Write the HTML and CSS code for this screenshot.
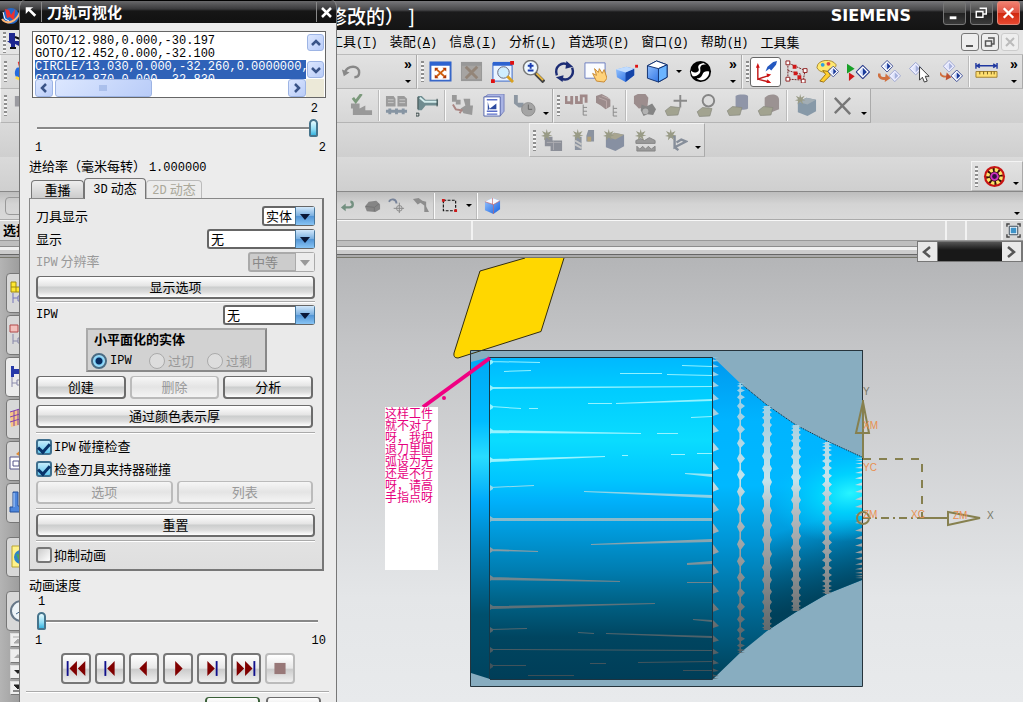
FILE: index.html
```html
<!DOCTYPE html>
<html lang="zh-CN">
<head>
<meta charset="utf-8">
<title>刀轨可视化</title>
<link rel="stylesheet" href="styles.css">
</head>
<body>
<svg width="0" height="0" class="defs" aria-hidden="true">
  <defs>
    <linearGradient id="blue" x1="0" y1="0" x2="1" y2="1"><stop offset="0" stop-color="#9cc8ff"/><stop offset="1" stop-color="#1560e0"/></linearGradient>
    <symbol id="dia" viewBox="0 0 14 14"><path d="M7 .5 13.500 7 7 13.500.5 7z" fill="#fff" stroke="#2a3c8c"/><path d="M7 3v8L3.500 7z" fill="#c9d6fa"/><path d="M7 3v8l4-4z" fill="#1a3a9a"/></symbol>
    <symbol id="diaOff" viewBox="0 0 14 14"><path d="M7 .5 13.500 7 7 13.500.5 7z" fill="#eef" stroke="#98a2d0"/><path d="M7 3v8L3.500 7z" fill="#dde3fa"/><path d="M7 3v8l4-4z" fill="#a5b0dc"/></symbol>
    <symbol id="tag" viewBox="0 0 16 10"><path d="M1 5 6 1l9 1-2 7-10 .5z" fill="#a2a390" stroke="#8a8b80" stroke-width=".7"/></symbol>
    <symbol id="star" viewBox="0 0 12 12"><path d="m6 0 1 4 4-2-2.500 4 3.500 1-4 .6L9.500 12 6 8.600 3 12l.6-4L0 7.200 3.600 6 1 2l4 2z" fill="#999b86"/></symbol>
  </defs>
</svg>

<div class="app">
  <header class="titlebar">
    <svg class="logo" viewBox="0 0 22 22"><circle cx="11" cy="11" r="8" fill="#2368c8"/><path d="M5 4l4 1 2 5 4-6-1 12-4-4-3 1z" fill="#f03030"/><path d="M2 14c5 7 15 2 18-7" fill="none" stroke="#ffb878" stroke-width="2"/><path d="M3 7l2 7 4 2" fill="none" stroke="#fff"/></svg>
    <h1 class="doc-title">修改的） ]</h1>
    <span class="brand">SIEMENS</span>
    <div class="win-buttons">
      <button class="win" aria-label="最小化"><svg viewBox="0 0 22 22"><path d="M6 16h7" stroke="#fff" stroke-width="3"/></svg></button>
      <button class="win" aria-label="还原"><svg viewBox="0 0 22 22"><path d="M9 6h7v6h-3M5.500 9.500h7v6h-7z" fill="none" stroke="#fff" stroke-width="1.500"/></svg></button>
      <button class="win close" aria-label="关闭"><svg viewBox="0 0 22 22"><path d="m6 6 10 10M16 6 6 16" stroke="#fff" stroke-width="2.500"/></svg></button>
    </div>
  </header>

  <nav class="menubar">
    <i class="grip"></i>
    <svg class="menu-icon" viewBox="0 0 14 20"><path d="M2 1h6v8h4v5l-4-2v4H4v-4l-4-3h2z" fill="#1f2890"/><path d="M3 16h6M8 5l5 2v5" stroke="#111" stroke-width="2" fill="none"/></svg>
    <div class="menus">
      <button>工具<span>(<u>T</u>)</span></button>
      <button>装配<span>(<u>A</u>)</span></button>
      <button>信息<span>(<u>I</u>)</span></button>
      <button>分析<span>(<u>L</u>)</span></button>
      <button>首选项<span>(<u>P</u>)</span></button>
      <button>窗口<span>(<u>O</u>)</span></button>
      <button>帮助<span>(<u>H</u>)</span></button>
      <button>工具集</button>
    </div>
    <div class="mdi-buttons">
      <button aria-label="最小化窗口"><svg viewBox="0 0 16 16"><path d="M4 12h7" stroke="#555" stroke-width="2"/></svg></button>
      <button aria-label="还原窗口"><svg viewBox="0 0 16 16"><path d="M6 4h6v6h-2M3.500 7h6v5h-6z" fill="none" stroke="#555" stroke-width="1.500"/></svg></button>
      <button disabled aria-label="关闭窗口"><svg viewBox="0 0 16 16"><path d="m4 4 8 8m0-8-8 8" stroke="#bbb" stroke-width="2"/></svg></button>
    </div>
  </nav>

  <div class="toolrow">
    <div class="group lead-a">
      <i class="grip"></i>
      <button class="tool" aria-label="开始"><svg viewBox="0 0 24 24"><path d="M6 2 12 0 16 4 9 14z" fill="#e83030"/><path d="M5 8c-4 5-2 12 5 13h8V6z" fill="#246be0"/><path d="M4 18l8 4" stroke="#ffd840" stroke-width="3"/></svg></button>
      <b class="fill"></b>
      <button class="tool" disabled aria-label="撤销"><svg viewBox="0 0 24 24"><path d="M5 13c3-8 15-8 15 0 0 3-2 5-5 5" fill="none" stroke="#888" stroke-width="2.500"/><path d="m2 10 2 7 6-4z" fill="#888"/></svg></button>
      <b class="gap"></b>
      <button class="more" aria-label="更多"><span>»</span><i></i></button>
    </div>
    <div class="group lead-b">
      <i class="grip"></i>
      <button class="tool" aria-label="适合窗口"><svg viewBox="0 0 24 24"><path d="M1.500 2.500h21v19h-21z" fill="#fff" stroke="#3867c8" stroke-width="2"/><path d="M1 2h22v4H1z" fill="#2d63d0"/><path d="m7 9 10 9M17 9 7 18" stroke="#d06010" stroke-width="2"/><path d="M6 8h4L6 12zM18 8v4l-4-4zM6 19v-4l4 4zM18 19h-4l4-4z" fill="#b03808"/></svg></button>
      <button class="tool" disabled aria-label="适合选择"><svg viewBox="0 0 24 24"><path d="M1 2h22v20H1z" fill="#989898"/><path d="M2 6h20v14H2z" fill="#a6a4a2"/><path d="m6 7 12 12M18 7 6 19" stroke="#938578" stroke-width="3"/></svg></button>
      <button class="tool" aria-label="缩放窗口"><svg viewBox="0 0 24 24"><path d="M2 3h20v19H2z" fill="#eaf4ff" stroke="#3465ca"/><path d="M2 2h20v4H2z" fill="#2d63d0"/><circle cx="13" cy="13" r="6" fill="#cfeeff" stroke="#667"/><path d="m17 17 6 6" stroke="#d8a020" stroke-width="3"/><path d="M20 1h4v4h-4zM0 20h4v4H0z" fill="#e01010"/></svg></button>
      <button class="tool" aria-label="缩放"><svg viewBox="0 0 24 24"><circle cx="9" cy="8" r="7.500" fill="#eef8ff" stroke="#777" stroke-width="1.500"/><path d="M9 3v6M6 6h6M6 11h6" stroke="#1a3cb0" stroke-width="2"/><path d="m14 14 9 9" stroke="#444" stroke-width="4"/><path d="m15 14 7 7" stroke="#e8b840" stroke-width="2"/></svg></button>
      <button class="tool" aria-label="旋转"><svg viewBox="0 0 24 24"><path d="M4 16C1 7 9 1 16 5M20 8c3 9-5 15-12 11" fill="none" stroke="#1c2c74" stroke-width="2.500"/><path d="m14 1 7 6-8 2zM10 23l-7-5 8-2z" fill="#1c2c74"/></svg></button>
      <button class="tool" aria-label="平移"><svg viewBox="0 0 24 24"><path d="M1 3h21v16H1z" fill="#fafcff" stroke="#6c7ec0"/><path d="m9 14 4 8 8 1 3-4-3-9-2 4-3-5-1 4-4-4 2 7z" fill="#ffd27a" stroke="#c88830"/></svg></button>
      <button class="tool" aria-label="透视"><svg viewBox="0 0 24 24"><path d="M1 10 12 7l8 2v7l-9 7-9-5z" fill="url(#blue)"/><path d="m11 13 9-4v7l-9 7z" fill="#1545a8"/><path d="m1 10 11-3 8 2-9 4z" fill="#c0dcff"/><path d="M21 5h3v3h-3z" fill="#e01010"/></svg></button>
      <button class="tool" aria-label="着色"><svg viewBox="0 0 24 24"><path d="M1.500 6 11 1l11 4v13l-9 5-11.500-4z" fill="url(#blue)" stroke="#103070"/><path d="M1.500 6 11 1l11 4-9 4z" fill="#fff" stroke="#103070"/><path d="M13 9v14l9-5V5z" fill="#6ab4ff" stroke="#103070"/></svg></button>
      <button class="drop mid" aria-label="着色选项"></button>
      <button class="tool" aria-label="面分析"><svg viewBox="0 0 24 24"><circle cx="12" cy="12" r="11" fill="#000"/><path d="M15 3c-5 1-6 3-5 6 1 2-1 4-4 4-2 0-3-1-4-2 0 3 1 5 2 6 3 0 5-1 7-3 2-3 0-5 1-7s3-3 6-2z" fill="#fff"/><path d="M21 12c-3-1-6 0-7 3s-3 4-6 4c3 3 8 3 11-1 2-2 2-4 2-6z" fill="#fff"/></svg></button>
      <b class="fill"></b>
      <button class="more" aria-label="更多"><span>»</span><i></i></button>
    </div>
    <div class="group rest">
      <i class="grip"></i>
      <button class="tool on" aria-label="坐标系"><svg viewBox="0 0 24 24"><path d="M4 7v13l12-4M4 20l12 3" fill="none" stroke="#c01818" stroke-width="1.500"/><path d="m4 3-2 5h4zM13 14l5 1-4 3zM14 20l4 4-5 0z" fill="#d01010"/><path d="m14 7 6-5 4-1-1 4-5 6-2-2-4 3z" fill="#2458c0"/></svg></button>
      <button class="tool" aria-label="程序顺序"><svg viewBox="0 0 24 24"><path d="M3 3v17l16 1 2-10zM3 11l14 4" fill="none" stroke="#702020" stroke-dasharray="2 1"/><path d="M1 1h4v4H1zM1 18h4v4H1zM19 9h4v4h-4zM17 20h4v4h-4z" fill="#fff" stroke="#902020"/><path d="M8 5h4v4H8zM9 12h4v4H9zM13 16h4v4h-4z" fill="#d01818"/></svg></button>
      <button class="tool" aria-label="刀具"><svg viewBox="0 0 24 24"><path d="M1 8C1-1 17-2 21 5c0 5-7 2-8 6-2 3-10 2-12-3z" fill="#ffe870" stroke="#a88830"/><circle cx="7" cy="5" r="2" fill="#30a0e0"/><circle cx="13" cy="4" r="2" fill="#e04040"/><path d="m4 22 6-7-3-4 6 1 2 4-7 7z" fill="#ffcf30" stroke="#9a7010"/><use href="#dia" x="12" y="6" width="12" height="12"/></svg></button>
      <button class="tool" aria-label="仿真"><svg viewBox="0 0 24 24"><path d="m0 4 8 5-8 5z" fill="#18a028"/><path d="m2 13 6 4-6 5z" fill="#d01818"/><use href="#dia" x="9" y="5" width="15" height="15"/></svg></button>
      <button class="tool" aria-label="后处理"><svg viewBox="0 0 24 24"><use href="#dia" x="3" y="0" width="13" height="13"/><use href="#diaOff" x="11" y="10" width="13" height="13"/><path d="M1 14c0 5 4 6 8 5" fill="none" stroke="#d07040" stroke-width="3"/><path d="m8 14 5 5-6 4z" fill="#d07040"/></svg></button>
      <button class="tool" aria-label="选择"><svg viewBox="0 0 24 24"><use href="#diaOff" x="0" y="2" width="14" height="14"/><path d="m11 7 10 10h-4l2 5-3 1-2-5-3 3z" fill="#fff" stroke="#333"/></svg></button>
      <button class="tool" aria-label="变换"><svg viewBox="0 0 24 24"><use href="#diaOff" x="3" y="0" width="13" height="13"/><use href="#dia" x="11" y="10" width="13" height="13"/><path d="M0 13c1 4 4 5 8 4" fill="none" stroke="#d07040" stroke-width="2"/><path d="m7 13 5 5-6 3z" fill="#c05030"/></svg></button>
      <i class="sep"></i>
      <button class="tool" aria-label="测量"><svg viewBox="0 0 24 24"><path d="M1 6h22M1 3v6m22-6v6M5 4 2 6l3 2m14-4 3 2-3 2" fill="none" stroke="#2038a0" stroke-width="1.500"/><path d="M1 12h22v6H1z" fill="#ffdf70" stroke="#a08030"/><path d="M5 12v3m4-3v3m4-3v3m4-3v3m3-3v3" stroke="#705818"/></svg></button>
      <b class="fill"></b>
      <button class="more" aria-label="更多"><span>»</span><i></i></button>
    </div>
  </div>

  <div class="toolrow">
    <div class="group lead-c">
      <i class="grip"></i>
      <button class="tool" disabled aria-label="创建程序"><svg viewBox="0 0 24 24"><path d="M3 2h7v10h13v8H10v-7H3z" fill="#9a9aa0"/></svg></button>
      <b class="fill"></b>
      <button class="tool" disabled aria-label="校验"><svg viewBox="0 0 24 24"><path d="M1 10h9v5l6-3v5h7v5H3v-7H1z" fill="#999"/><path d="m3 4 3 4 6-8" fill="none" stroke="#7b997b" stroke-width="3"/></svg></button>
      <i class="sep"></i>
      <button class="tool" disabled aria-label="列表"><svg viewBox="0 0 24 24"><path d="M1 2h8l2 3v8H1zM13 2h7l3 3v8H13z" fill="#9b9b9b"/><path d="M3 6h6M3 9h6m6-3h6m-6 3h6" stroke="#c8c8c8"/><path d="M1 18h22M5 15v6m7-6v6m7-6v6" stroke="#8795a3" stroke-width="3"/></svg></button>
      <button class="tool" aria-label="机床"><svg viewBox="0 0 24 24"><path d="M2 2h4l4 4h13v6H10l-4 5H2z" fill="#6f8c90"/><path d="M4 4l5 4h13" stroke="#d4ecec" stroke-width="2" fill="none"/><path d="M2 3v13M0 20h3v3H0zM22 5v8" stroke="#344" fill="none"/></svg></button>
      <i class="sep"></i>
      <button class="tool" disabled aria-label="同步"><svg viewBox="0 0 24 24"><path d="M1 1h5v5h4v5H5V8H1zM13 5h7v7h3l-1 10-9-2-3-5 5-3z" fill="#999"/><path d="m2 11 3 5 6 1-2 3" fill="none" stroke="#aa8582" stroke-width="2"/></svg></button>
      <button class="tool" aria-label="车间文档"><svg viewBox="0 0 24 24"><path d="m3 3 4-3h16v18l-4 5z" fill="#a9b3e4" stroke="#7a83b8"/><path d="M2 3h17v20H2z" fill="#fff" stroke="#5262a8"/><path d="M5 6h11M5 18h11m-11 3h11" stroke="#5a6ec8" stroke-width="1.500"/><path d="M6 8v9l9-7v6H8z" fill="#2d4ba0"/></svg></button>
      <button class="tool" disabled aria-label="时间"><svg viewBox="0 0 24 24"><path d="M1 1h4v8h6v5H6l-5-4z" fill="#8d97a2"/><circle cx="16" cy="16" r="7" fill="#a4a4a4" stroke="#8c8c8c"/><path d="M16 11v5h4" stroke="#666" fill="none"/></svg></button>
      <button class="drop" aria-label="选项"></button>
    </div>
    <div class="group lead-d">
      <i class="grip"></i>
      <button class="tool" disabled aria-label="程序视图"><svg viewBox="0 0 24 24"><path d="M1 2v7h6M7 2v9m5-9v7h5V2h5v7" fill="none" stroke="#9f8888" stroke-width="3"/><path d="M19 11v11M19 14h4m-4 4h4m-4 4h4" stroke="#888" fill="none"/></svg></button>
      <button class="tool" disabled aria-label="加工方法"><svg viewBox="0 0 24 24"><path d="M0 2 6 0l6 3 3 3v7l-5 3-5-4-5-3z" fill="#9c8c8c"/><path d="M3 4l8 3v8M6 2l8 3" stroke="#bba9a9" fill="none"/><path d="M18 12v11M18 15h4m-4 4h4m-4 4h4" stroke="#888" fill="none"/></svg></button>
      <i class="sep"></i>
      <button class="tool" disabled aria-label="查找"><svg viewBox="0 0 24 24"><path d="M1 2 5 0h8l3 4-1 10-9 1-5-5z" fill="#9c8d8d"/><path d="m9 11 5 2 6-3 4 6-3 6-6-1-4 2-3-6z" fill="#858585"/><circle cx="13" cy="18" r="3" fill="#b2b2b2"/></svg></button>
      <button class="tool" disabled aria-label="添加"><svg viewBox="0 0 24 24"><path d="M17 1v13m-7-7h14" stroke="#8a8a8a" stroke-width="2"/><use href="#tag" x="0" y="12" width="18" height="11"/></svg></button>
      <button class="tool" disabled aria-label="显示对象"><svg viewBox="0 0 24 24"><circle cx="14" cy="7" r="6" fill="#ddd" stroke="#858585" stroke-width="2"/><use href="#tag" x="1" y="13" width="18" height="11"/></svg></button>
      <button class="tool" disabled aria-label="切换图层"><svg viewBox="0 0 24 24"><path d="M10 2c3-2 11-2 13 0v13c-3 2-10 2-13 0z" fill="#8f95a8"/><use href="#tag" x="0" y="12" width="18" height="11"/></svg></button>
      <button class="tool" disabled aria-label="切换布局"><svg viewBox="0 0 24 24"><path d="M8 4c4-5 15-5 15 2v10l-8 3-7-4z" fill="#9b9292"/><use href="#tag" x="0" y="12" width="18" height="11"/></svg></button>
      <i class="sep"></i>
      <button class="tool" disabled aria-label="新建"><svg viewBox="0 0 24 24"><path d="m4 8 9-4 10 2v12l-9 5-10-4z" fill="#8799a8"/><path d="m4 8 10 3 9-5-10-2z" fill="#a3aeb5"/><use href="#star" x="1" y="0" width="11" height="11"/></svg></button>
      <i class="sep"></i>
      <button class="tool" disabled aria-label="删除对象"><svg viewBox="0 0 24 24"><path d="m4 4 16 17M20 4 4 20" stroke="#777" stroke-width="2.500"/></svg></button>
      <button class="drop" aria-label="选项"></button>
    </div>
  </div>

  <div class="toolrow">
    <div class="group inset-e">
      <i class="grip"></i>
      <button class="tool" disabled aria-label="新建程序"><svg viewBox="0 0 24 24"><path d="M4 8h8v4h10v11H10v-5H4z" fill="#8c8f98"/><path d="M13 13v9M6 14h15" stroke="#acacb2"/><use href="#star" x="0" y="0" width="12" height="12"/></svg></button>
      <button class="tool" disabled aria-label="新建刀具"><svg viewBox="0 0 24 24"><path d="M3 8h7v14H3zM17 1h6v12h-8v-6z" fill="#8b93a0"/><path d="m3 12 7 4m-7 0 7 4" stroke="#c6c6c6" stroke-width="2"/><path d="M16 8h4v5h-4z" fill="#b3a27a"/><use href="#star" x="0" y="0" width="12" height="12"/></svg></button>
      <button class="tool" disabled aria-label="新建几何体"><svg viewBox="0 0 24 24"><path d="m3 8 9-4 10 2v12l-9 5-10-4z" fill="#8790a2"/><path d="m3 8 10 3 9-5-10-2z" fill="#a8a590"/><use href="#star" x="0" y="0" width="12" height="12"/></svg></button>
      <button class="tool" disabled aria-label="新建方法"><svg viewBox="0 0 24 24"><path d="M2 12l5-2 4 2 5-3 6 3v3H2zM3 23v-5l3 3 3-3 3 3 3-3 3 3 4-3v5z" fill="#999" stroke="#858585"/><use href="#star" x="1" y="0" width="12" height="12"/></svg></button>
      <button class="tool" disabled aria-label="新建工序"><svg viewBox="0 0 24 24"><path d="M5 8h5v11l12-6-5-2-5 3m-2 5 4 3" fill="none" stroke="#868e9a" stroke-width="2.500"/><use href="#star" x="0" y="0" width="12" height="12"/></svg></button>
      <button class="drop" aria-label="选项"></button>
    </div>
  </div>

  <div class="toolrow last">
    <div class="group inset-f">
      <i class="grip"></i>
      <button class="tool" aria-label="外挂"><svg viewBox="0 0 24 24"><circle cx="12" cy="12" r="11" fill="#c81414"/><circle cx="12" cy="12" r="8.500" fill="#301008"/><circle cx="12" cy="12" r="7" fill="none" stroke="#ffe26a" stroke-width="3.500" stroke-dasharray="3.500 2"/><circle cx="12" cy="12" r="3.500" fill="#301040" stroke="#d030c0" stroke-width="2"/></svg></button>
      <button class="drop" aria-label="选项"></button>
    </div>
  </div>

  <div class="selbar">
    <span class="stub"></span>
    <button class="small" disabled aria-label="返回"><svg viewBox="0 0 18 18"><path d="M5 11h5c5 0 4-6 1-6" fill="none" stroke="#739080" stroke-width="2.500"/><path d="m6 7-5 4 5 4z" fill="#739080"/></svg></button>
    <button class="small" disabled aria-label="实体"><svg viewBox="0 0 18 18"><path d="m1 10 4-5 8-1 4 4v5l-5 3-9-1z" fill="#858585"/><path d="m2 10 9 1 5-4m-5 4v4" stroke="#747474" fill="none"/></svg></button>
    <button class="small" disabled aria-label="捕捉"><svg viewBox="0 0 18 18"><path d="M1 5c2-4 8-3 8 2" fill="none" stroke="#78849a" stroke-width="2"/><circle cx="12" cy="12" r="3" fill="none" stroke="#888"/><path d="M12 6v11M6 12h11" stroke="#888"/></svg></button>
    <button class="small" disabled aria-label="过滤"><svg viewBox="0 0 18 18"><path d="m1 2 6-1 4 3 4 1v5l3 6h-5V9L9 6 6 8z" fill="#8d8d8d"/></svg></button>
    <i class="sep"></i>
    <button class="small wide" aria-label="矩形选择"><svg viewBox="0 0 18 18"><path d="M2.500 3.500h13v11h-13z" fill="none" stroke="#111" stroke-width="1.200" stroke-dasharray="3 1.500"/><path d="M1 2h3v3H1zM14 13h3v3h-3z" fill="#d01818"/></svg></button>
    <button class="drop mid" aria-label="选择方式"></button>
    <i class="sep"></i>
    <button class="small wide" aria-label="实体视图"><svg viewBox="0 0 18 18"><path d="m1 5 8-4 8 3v9l-7 5-9-4z" fill="url(#blue)"/><path d="m1 5 8-4 8 3-7 4z" fill="#f2f7ff"/><path d="M10 8v10M1 5l9 3 7-4M9 1v7" stroke="#c66" fill="none" stroke-width=".7"/></svg></button>
    <b class="fill"></b>
    <button class="drop" aria-label="选项"></button>
  </div>

  <div class="cuebar">
    <strong>选择</strong>
    <span class="cue"></span><span class="cell-a"></span><span class="cell-b"></span>
    <button class="full" aria-label="全屏"><svg viewBox="0 0 16 16"><path d="M1 4V1h3m8 0h3v3m0 8v3h-3m-8 0H1v-3" fill="none" stroke="#444" stroke-width="1.500"/><path d="M3.500 3.500h9v9h-9z" fill="#fff" stroke="#345"/><path d="M5 5h6v6H5z" fill="#3e93c8"/></svg></button>
  </div>

  <div class="strip">
    <div class="track">
      <button aria-label="向左"><svg viewBox="0 0 18 18"><path d="m12 4-6 5 6 5" fill="none" stroke="#555" stroke-width="2.500"/></svg></button>
      <i></i>
      <button aria-label="向右"><svg viewBox="0 0 18 18"><path d="m6 4 6 5-6 5" fill="none" stroke="#555" stroke-width="2.500"/></svg></button>
    </div>
  </div>

  <main class="work">
    <aside class="resources">
      <button aria-label="装配导航器"><svg viewBox="0 0 14 24"><path d="M2 1h5v5h5v5H2zM2 6h5v5" fill="#ffe832" stroke="#a08a10"/><path d="M4 12v10M4 17h5M9 15h5v5H9z" fill="none" stroke="#77b"/></svg></button>
      <button aria-label="约束导航器"><svg viewBox="0 0 14 24"><path d="M1 2h8v7H1z" fill="#f2c0bc" stroke="#b04848"/><path d="M4 11v10M4 18h5M9 15h5v5H9z" fill="none" stroke="#88a"/></svg></button>
      <button class="active" aria-label="工序导航器"><svg viewBox="0 0 14 24"><path d="M3 1h3v3h5v5H6v3H3z" fill="#2638a8"/><path d="M4 12v10M4 18h5M9 15h5v5H9z" fill="none" stroke="#88a"/></svg></button>
      <button aria-label="部件导航器"><svg viewBox="0 0 14 24"><path d="m1 5 13-4v16L2 20z" fill="#f7c583"/><path d="m1 5 13-4M1 10l13-4M1 15l13-4M5 4v15m4-17v16" stroke="#8040b0" fill="none"/></svg></button>
      <button aria-label="重用库"><svg viewBox="0 0 14 24"><path d="m7 5 5-4 2 8z" fill="#e08a30"/><path d="M1 8h12v12H1z" fill="#fff" stroke="#558"/><path d="M4 12h6v5H4z" fill="none" stroke="#558"/></svg></button>
      <button aria-label="机床视图"><svg viewBox="0 0 14 24"><path d="M4 1h5v14h5v6H1v-5h3z" fill="#4d86dc" stroke="#25509c"/><path d="M5 2v14" stroke="#b7d6ff"/></svg></button>
      <button class="spaced" aria-label="浏览器"><svg viewBox="0 0 14 24"><path d="M3 1h11v21H3z" fill="#fff28a" stroke="#bba630"/><circle cx="12" cy="12" r="7" fill="#2e83c8"/><path d="m7 9 5 1-2 6z" fill="#4aa85a"/></svg></button>
      <button class="spaced" aria-label="历史记录"><svg viewBox="0 0 14 24"><circle cx="12" cy="12" r="10" fill="#eef4f8" stroke="#678" stroke-width="2"/><path d="M12 5v7l-5 3" fill="none" stroke="#468"/></svg></button>
      <button class="nudge" aria-label="顶部"><svg viewBox="0 0 10 12"><path d="M2 3h8M3 9h7L7 5z" fill="#aaa" stroke="#aaa"/></svg></button>
      <button class="nudge" aria-label="上移"><svg viewBox="0 0 10 12"><path d="M3 8h7L7 4z" fill="#aaa"/></svg></button>
      <button class="nudge" aria-label="下移"><svg viewBox="0 0 10 12"><path d="M3 4h7L7 8z" fill="#222"/></svg></button>
      <button class="nudge" aria-label="底部"><svg viewBox="0 0 10 12"><path d="M3 3h7L7 7zM2 9h8" fill="#222" stroke="#222"/></svg></button>
    </aside>
    <section class="canvas" aria-label="图形窗口">
      <svg class="scene" viewBox="19 258 1004 444" preserveAspectRatio="xMinYMin slice">
        <defs>
          <linearGradient id="body" gradientUnits="userSpaceOnUse" x1="0" y1="357" x2="0" y2="679">
            <stop offset="0" stop-color="#00b8ff"/><stop offset=".1" stop-color="#00ccff"/><stop offset=".26" stop-color="#0adcff"/><stop offset=".38" stop-color="#00c6ff"/><stop offset=".45" stop-color="#00b0fa"/><stop offset=".55" stop-color="#0098d8"/><stop offset=".66" stop-color="#007eb2"/><stop offset=".76" stop-color="#006286"/><stop offset=".87" stop-color="#004560"/><stop offset="1" stop-color="#003e58"/>
          </linearGradient>
          <linearGradient id="face" gradientUnits="userSpaceOnUse" x1="0" y1="357" x2="0" y2="679">
            <stop offset="0" stop-color="#00a8f4"/><stop offset=".2" stop-color="#00bcff"/><stop offset=".31" stop-color="#28dcff"/><stop offset=".45" stop-color="#00a8f8"/><stop offset=".6" stop-color="#0080ba"/><stop offset=".8" stop-color="#00506e"/><stop offset="1" stop-color="#00435e"/>
          </linearGradient>
          <linearGradient id="cone" x1="0" y1="0" x2="0" y2="1">
            <stop offset="0" stop-color="#0098ee"/><stop offset=".2" stop-color="#00b4ff"/><stop offset=".4" stop-color="#00b8ff"/><stop offset=".58" stop-color="#0094d4"/><stop offset=".78" stop-color="#006a96"/><stop offset="1" stop-color="#004058"/>
          </linearGradient>
          <linearGradient id="dusk" gradientUnits="userSpaceOnUse" x1="800" y1="525" x2="824" y2="600">
            <stop offset="0" stop-color="#003c54" stop-opacity="0"/><stop offset="1" stop-color="#003c54" stop-opacity=".9"/>
          </linearGradient>
          <radialGradient id="shine" gradientUnits="userSpaceOnUse" cx="850" cy="493" r="80" gradientTransform="translate(850 493) rotate(-8) scale(1 .6) translate(-850 -493)">
            <stop offset="0" stop-color="#28f4ff"/><stop offset=".4" stop-color="#00d8ff" stop-opacity=".8"/><stop offset="1" stop-color="#00c0ff" stop-opacity="0"/>
          </radialGradient>
          <linearGradient id="cut" gradientUnits="userSpaceOnUse" x1="0" y1="357" x2="0" y2="679">
            <stop offset="0" stop-color="#8fd0ee"/><stop offset=".2" stop-color="#a8d0e0"/><stop offset=".38" stop-color="#c4e4ec"/><stop offset=".48" stop-color="#b4bcc0"/><stop offset=".62" stop-color="#989c9e"/><stop offset=".8" stop-color="#6c7274"/><stop offset="1" stop-color="#45525a"/>
          </linearGradient>
          <linearGradient id="streak" gradientUnits="userSpaceOnUse" x1="0" y1="357" x2="0" y2="679">
            <stop offset="0" stop-color="#8ef0ff"/><stop offset=".32" stop-color="#98f4ff"/><stop offset=".45" stop-color="#8ccbe0"/><stop offset=".6" stop-color="#889ca4"/><stop offset=".78" stop-color="#5c7078"/><stop offset="1" stop-color="#3b4c54"/>
          </linearGradient>
        </defs>
        <path d="M470.500 350.500h392v336h-392z" fill="#88adc0" stroke="#26343c"/>
        <path d="M480 271 525 258H564L541 331.500 458 358Q453 358 454 353L479 273Z" fill="#ffd700"/>
        <path d="M470.500 351H480L470.500 354z" fill="#88adc0"/>
        <path d="M525 258 480 271 454 353Q453 358 458 358L541 331.500 564 258" fill="none" stroke="#332d10"/>
        <path d="M470.500 362V350.500H500" fill="none" stroke="#26343c"/>
        <path d="M471 362 490 357V679L471 673Z" fill="url(#face)"/>
        <path d="M490 357H713V679H490Z" fill="url(#body)"/>
        <path d="M713 357 740 383 767 405 796 425 827 441 862 457V580L827 594 796 612 767 631 740 653 713 679Z" fill="url(#cone)"/>
        <path d="M770 520H862V580L827 594 796 612 770 629Z" fill="url(#dusk)"/>
        <path d="M713 357 740 383 767 405 796 425 827 441 862 457V580L827 594 796 612 767 631 740 653 713 679Z" fill="url(#shine)"/>
        <path d="M740 383 767 405 796 425 827 441 862 457" fill="none" stroke="#123" stroke-dasharray="1 1"/>
        <g id="streaks" fill="url(#streak)"></g>
        <g id="bands" fill="url(#cut)"></g>
        <path d="M490 357.500H712.500V679.500H490" fill="none" stroke="#1c3340"/>
        <path d="M489.500 357V679" stroke="#153848"/>
        <path d="M862.500 350V686" stroke="#26343c"/>
        <g fill="none" stroke="#86804f" stroke-width="2">
          <path d="M863 458V400M856 433 863 402 869 433Z"/>
          <path d="M863 459H922V518" stroke-dasharray="8 8"/>
          <path d="M922 518H948M948 512V525L980 518Z"/>
          <path d="M863 518H922" stroke-dasharray="8 4 2 4"/>
          <circle cx="863" cy="518" r="6"/>
        </g>
        <g class="axis-label">
          <text x="863" y="395" class="dim">Y</text><text x="987" y="519" class="dim">X</text>
          <text x="863" y="429">XM</text><text x="863" y="471">YC</text><text x="863" y="518">ZM</text><text x="911" y="518">XC</text><text x="953" y="519">ZM</text>
        </g>
        <path d="M423 407 490 358" stroke="#f00082" stroke-width="4"/><circle cx="444" cy="398" r="2" fill="#f00082"/>
      </svg>
      <p class="note">这样工件就不对了呀，我把退刀里圆弧设为无还是不行呀，请高手指点呀</p>
    </section>
  </main>
</div>

<div class="dialog" role="dialog" aria-labelledby="dlg-title">
  <header class="dlg-title">
    <svg class="pin" viewBox="0 0 22 22"><path d="M6 6h8l-3 2 6 6-2 2-6-6-3 3z" fill="#fff"/></svg>
    <h2 id="dlg-title">刀轨可视化</h2>
    <button aria-label="关闭"><svg viewBox="0 0 20 20"><path d="m5 6 9 9m0-9-9 9" stroke="#fff" stroke-width="2.500"/></svg></button>
  </header>
  <div class="dlg-body">
    <div class="listbox">
      <ul role="listbox" aria-label="刀轨">
        <li role="option">GOTO/12.980,0.000,-30.197</li>
        <li role="option">GOTO/12.452,0.000,-32.100</li>
        <li role="option" aria-selected="true">CIRCLE/13.030,0.000,-32.260,0.0000000,1</li>
        <li role="option" aria-selected="true">GOTO/12.870,0.000,-32.830</li>
      </ul>
      <div class="vscroll">
        <button aria-label="向上"><svg viewBox="0 0 16 16"><path d="m4 10 4-4 4 4" fill="none" stroke="#3a5488" stroke-width="2.500"/></svg></button>
        <button aria-label="向下"><svg viewBox="0 0 16 16"><path d="m4 6 4 4 4-4" fill="none" stroke="#3a5488" stroke-width="2.500"/></svg></button>
      </div>
      <div class="hscroll">
        <button aria-label="向左"><svg viewBox="0 0 16 16"><path d="M10 4 6 8l4 4" fill="none" stroke="#3a5488" stroke-width="2.500"/></svg></button>
        <i class="thumb"><svg viewBox="0 0 9 7"><path d="M1 0v6m2-6v6m2-6v6m2-6v6" stroke="#8ba6dc"/></svg></i>
        <button aria-label="向右"><svg viewBox="0 0 16 16"><path d="m6 4 4 4-4 4" fill="none" stroke="#3a5488" stroke-width="2.500"/></svg></button>
      </div>
      <i class="corner"></i>
    </div>

    <div class="slider">
      <output class="at-end num">2</output>
      <input type="range" min="1" max="2" value="2" aria-label="位置">
      <div class="ends num"><span>1</span><span>2</span></div>
    </div>
    <p class="label feed">进给率（毫米每转） <span class="num">1.000000</span></p>

    <div class="tabs" role="tablist">
      <button role="tab">重播</button><button role="tab" aria-selected="true"><span class="num">3D</span> 动态</button><button role="tab" disabled><span class="num">2D</span> 动态</button>
    </div>
    <div class="panel" role="tabpanel">
      <div class="row"><label for="tool">刀具显示</label><span class="pick w54"><select id="tool"><option>实体</option></select></span></div>
      <div class="row"><label for="show">显示</label><span class="pick w108"><select id="show"><option>无</option></select></span></div>
      <div class="row off"><label for="res"><span class="num">IPW</span> 分辨率</label><span class="pick w66 off"><select id="res" disabled><option>中等</option></select></span></div>
      <div class="buttons first"><button class="btn">显示选项</button></div>
      <hr>
      <div class="row"><label for="ipw" class="num">IPW</label><span class="pick w92"><select id="ipw"><option>无</option></select></span></div>
      <fieldset class="facet">
        <legend>小平面化的实体</legend>
        <label><input type="radio" name="facet" checked><span class="num">IPW</span></label>
        <label class="off"><input type="radio" name="facet" disabled>过切</label>
        <label class="off"><input type="radio" name="facet" disabled>过剩</label>
      </fieldset>
      <div class="buttons inset"><button class="btn">创建</button><button class="btn" disabled>删除</button><button class="btn">分析</button></div>
      <div class="buttons inset thick"><button class="btn">通过颜色表示厚</button></div>
      <hr>
      <label class="check"><input type="checkbox" checked><span><span class="num">IPW</span> 碰撞检查</span></label>
      <label class="check"><input type="checkbox" checked>检查刀具夹持器碰撞</label>
      <div class="buttons inset"><button class="btn" disabled>选项</button><button class="btn" disabled>列表</button></div>
      <hr>
      <div class="buttons"><button class="btn">重置</button></div>
      <hr class="tight">
      <label class="check"><input type="checkbox">抑制动画</label>
    </div>

    <p class="label speed">动画速度</p>
    <div class="slider two">
      <output class="at-start num">1</output>
      <input type="range" min="1" max="10" value="1" aria-label="动画速度">
      <div class="ends num"><span>1</span><span>10</span></div>
    </div>
    <div class="player">
      <button aria-label="回到起点"><svg viewBox="0 0 28 28"><path d="M5 6v16" stroke="#10108c" stroke-width="2"/><path d="m15 6-8 8 8 8zM24 6l-8 8 8 8z" fill="#800000"/></svg></button>
      <button aria-label="上一步"><svg viewBox="0 0 28 28"><path d="M9 6v16" stroke="#10108c" stroke-width="2"/><path d="m19 6-8 8 8 8z" fill="#800000"/></svg></button>
      <button aria-label="反向播放"><svg viewBox="0 0 28 28"><path d="m17 6-8 8 8 8z" fill="#800000"/></svg></button>
      <button aria-label="播放"><svg viewBox="0 0 28 28"><path d="m11 6 8 8-8 8z" fill="#800000"/></svg></button>
      <button aria-label="下一步"><svg viewBox="0 0 28 28"><path d="M19 6v16" stroke="#10108c" stroke-width="2"/><path d="m9 6 8 8-8 8z" fill="#800000"/></svg></button>
      <button aria-label="到终点"><svg viewBox="0 0 28 28"><path d="M23 6v16" stroke="#10108c" stroke-width="2"/><path d="m4 6 8 8-8 8zM13 6l8 8-8 8z" fill="#800000"/></svg></button>
      <button disabled aria-label="停止"><svg viewBox="0 0 28 28"><path d="M8 8h12v12H8z" fill="#987878"/></svg></button>
    </div>
    <hr class="wide-rule">
    <div class="confirm"><button class="btn ok" aria-label="确定"></button><button class="btn" aria-label="取消"></button></div>
  </div>
</div>
<script src="scene.js"></script>
</body>
</html>
```
FILE: styles.css
```css
* { box-sizing: border-box; }
html, body { height: 100%; }
body { margin: 0; overflow: hidden; position: relative; color: #000; font: 13px/16px "Noto Sans CJK SC", sans-serif; }
button { margin: 0; padding: 0; border: 0; background: none; color: inherit; font: inherit; }
h1, h2, p, ul { margin: 0; padding: 0; list-style: none; }
svg { display: block; }
.defs { position: absolute; }
.num { font-family: "Liberation Mono", monospace; font-size: 12px; }
.fill { flex: 1; }

/* application frame */
.app { height: 100%; display: flex; flex-direction: column; background: #d2d2d2; }
.app > * { flex: none; }
.titlebar { height: 30px; display: flex; align-items: center; padding-right: 3px; border-top: 1px solid #000; background: linear-gradient(#77777a, #48484a 9px, #1b1b1c 11px, #141414); color: #fff; }
.logo { width: 22px; height: 22px; }
.doc-title { flex: 1; padding-left: 306px; font: 500 19px/26px "Noto Sans CJK SC", sans-serif; white-space: pre; }
.brand { margin-right: 32px; font: bold 16px/28px "DejaVu Sans", sans-serif; }
.win-buttons { display: flex; gap: 4px; align-self: flex-start; }
.win { width: 23px; height: 24px; border: 1px solid #777; border-radius: 3px; background: linear-gradient(#777, #444 50%, #222 52%, #3a3a3a); }
.win.close { background: linear-gradient(#f08070, #e05040 50%, #d02810 52%, #e84830); border-color: #e08878; }
.win svg { width: 21px; height: 22px; }

.menubar { height: 25px; display: flex; align-items: center; padding-right: 4px; background: #e4e4e4; border-bottom: 1px solid #bbb; }
.menu-icon { width: 14px; height: 20px; }
.menus { flex: 1; display: flex; gap: 12px; padding-left: 309px; }
.menus button { line-height: 18px; white-space: nowrap; }
.menus span { font: 12px/18px "Liberation Mono", monospace; }
.mdi-buttons { display: flex; gap: 2px; }
.mdi-buttons button { width: 18px; height: 18px; border: 1px solid #777; border-radius: 3px; background: #eee; }
.mdi-buttons button:disabled { border-color: #ccc; }

.toolrow { height: 34px; display: flex; background: linear-gradient(#dadada, #cfcfcf); }
.toolrow.last { height: 35px; justify-content: flex-end; border-bottom: 1px solid #888; }
.group { display: flex; align-items: center; background: linear-gradient(#e2e2e2, #d6d6d6); border-right: 1px solid #aaa; border-bottom: 1px solid #b4b4b4; border-left: 1px solid #f4f4f4; }
.lead-a { width: 417px; }
.lead-b { width: 325px; }
.rest { flex: 1; }
.lead-c { width: 553px; }
.lead-d { width: 318px; }
.inset-e { margin-left: 529px; border-top: 1px solid #f4f4f4; }
.inset-f { width: 52px; margin-top: 4px; border-top: 1px solid #f4f4f4; }
.grip { flex: none; width: 3px; height: 21px; margin: 0 1px 0 3px; background: repeating-linear-gradient(#8e8e8e 0 2px, #f6f6f6 2px 4px); }
.tool { flex: none; width: 31px; height: 30px; display: grid; place-items: center; }
.tool svg { width: 23px; height: 23px; }
.tool.on { border: 1px solid #666; border-radius: 3px; background: #fff; }
.gap { width: 33px; }
.sep { flex: none; width: 2px; height: 31px; margin: 0 1px; border-left: 1px solid #bbb; background: #fafafa; }
.lead-d .sep { margin: 0 2px; }
.drop { flex: none; width: 12px; height: 30px; display: grid; place-items: end center; padding-bottom: 6px; }
.drop::after, .more i { content: ""; width: 0; border: 3px solid transparent; border-top-color: #000; border-bottom: 0; }
.drop.mid { place-items: center; padding: 0; }
.more { flex: none; width: 16px; height: 28px; display: flex; flex-direction: column; align-items: center; justify-content: space-between; padding-bottom: 3px; }
.more span { font: bold 14px/12px "Liberation Sans", sans-serif; }

.selbar { height: 28px; display: flex; align-items: center; background: linear-gradient(#bdbdbd, #d4d4d4 12px, #d9d9d9); border-bottom: 1px solid #aaa; }
.stub { width: 331px; height: 18px; margin: 0 0 0 5px; border: 1px solid #999; border-radius: 4px; }
.small { flex: none; width: 24px; display: grid; place-items: center; }
.small.wide { width: 27px; }
.small svg { width: 17px; height: 17px; }
.selbar .sep { height: 26px; }
.cuebar { height: 21px; display: flex; background: #d8d8d8; border-top: 1px solid #f8f8f8; border-bottom: 1px solid #999; }
.cuebar strong { width: 471px; padding-left: 3px; line-height: 18px; }
.cuebar span { border-left: 2px solid #f2f2f2; }
.cue { flex: 1; }
.cell-a { width: 20px; }
.cell-b { width: 36px; }
.full { width: 22px; display: grid; place-items: center; border-left: 2px solid #f2f2f2; }
.full svg { width: 15px; height: 15px; }
.strip { height: 17px; display: flex; justify-content: flex-end; background: linear-gradient(#bebebe 0 5px, #8c8c8c 5px 6px, #f0f0f0 6px 9px, #ccc 9px 13px, #666 13px 14px, #aaa 14px 16px, #77776c 16px); }
.track { width: 106px; height: 21px; display: flex; z-index: 1; border: 1px solid #777; background: linear-gradient(#555, #181818 8px); }
.track button { width: 20px; background: #e8e8e8; border-right: 1px solid #777; }
.track svg { width: 18px; height: 18px; }
.track i { flex: 1; }

/* resource bar and graphics window */
.app > .work { flex: 1; min-height: 0; display: flex; }
.resources { width: 19px; padding: 15px 0 0 5px; background: linear-gradient(90deg, #b4b4b4, #9e9e9e); overflow: hidden; }
.resources button { display: block; width: 24px; height: 40px; margin: 0 0 2px 1px; padding-left: 2px; border: 1px solid #777; border-radius: 4px; background: #d8d8d8; }
.resources .active { margin-left: 0; background: #ececec; }
.resources .spaced { margin-top: 14px; }
.resources svg { width: 14px; height: 24px; }
.resources .nudge { height: 14px; margin-left: 5px; padding: 0; border-color: #ddd #777 #777 #ddd; border-radius: 0; background: #eee; }
.resources .nudge svg { width: 10px; height: 12px; }
.canvas { flex: 1; position: relative; overflow: hidden; background: linear-gradient(#b4b5b7, #c4c5c7 90px, #e4e6e8 340px, #e8eaec); }
.scene { width: 100%; height: 100%; }
.axis-label text { font: 10px "Liberation Sans", sans-serif; fill: #e89050; }
.axis-label .dim { fill: #777766; }
.note { position: absolute; left: 366px; top: 149px; width: 53px; height: 163px; background: #fff; color: #e6007e; font-size: 12px; line-height: 12px; line-break: anywhere; }

/* dialog */
.dialog { position: absolute; left: 19px; top: 0; bottom: 0; width: 318px; display: flex; flex-direction: column; border: 1px solid #777; border-top: 0; border-bottom: 0; border-radius: 6px 6px 0 0; background: #ececec; overflow: hidden; }
.dlg-title { flex: none; height: 23px; display: flex; align-items: center; border-top: 1px solid #000; background: linear-gradient(#68686a, #3a3a3c 8px, #161616 10px, #111); color: #fff; }
.pin { width: 21px; height: 22px; }
.dlg-title h2 { flex: 1; padding-left: 5px; border-left: 1px solid #888; font: 700 15px/20px "Noto Sans CJK SC", sans-serif; }
.dlg-title button { width: 20px; border-left: 1px solid #888; }
.dlg-title button svg { width: 20px; height: 20px; }
.dlg-body { flex: 1; min-height: 0; padding: 8px 12px 0 9px; }

.listbox { display: grid; grid-template: 45px 18px / 1fr 18px; height: 67px; margin: 0 -2px 0 3px; padding: 2px 1px 0 2px; border: 1px solid #666; background: #fff; }
.listbox ul { overflow: hidden; }
.listbox li { height: 13px; font: 12px/14px "Liberation Mono", monospace; white-space: nowrap; overflow: hidden; }
.listbox li[aria-selected] { background: #2f62b8; color: #fff; }
.listbox button, .thumb { border: 1px solid #9db4e4; border-radius: 3px; background: linear-gradient(135deg, #dce7ff, #b9ccf8); }
.listbox button svg { width: 16px; height: 16px; }
.vscroll { display: flex; flex-direction: column; justify-content: space-between; padding: 0 0 1px 1px; }
.vscroll button { height: 17px; }
.hscroll { display: flex; gap: 2px; }
.hscroll button { width: 18px; height: 18px; }
.corner { background: #ece9d8; }
.thumb { width: 97px; display: grid; place-items: center; }
.thumb svg { width: 9px; height: 7px; }
.hscroll button:last-child { margin-left: auto; }

.slider { padding: 3px 6px 0 8px; }
.slider output { display: block; line-height: 16px; }
.at-end { text-align: right; }
.at-start { padding-left: 1px; }
.slider input { display: block; width: 100%; height: 20px; margin: 1px 0 2px; appearance: none; background: linear-gradient(#0000 9px, #888 9px 11px, #fff 11px 12px, #0000 12px); }
.slider input::-webkit-slider-thumb { appearance: none; width: 9px; height: 18px; border: 2px solid #46748c; border-radius: 5px 5px 2px 2px; background: linear-gradient(#e8fcff, #8edcf4 60%, #38b4e0); }
.ends { display: flex; justify-content: space-between; margin: 0 -8px 0 -2px; line-height: 16px; }
.label { line-height: 18px; white-space: pre; }
.feed { margin-top: 1px; }

.tabs { display: flex; align-items: flex-end; height: 21px; padding-left: 2px; }
.tabs button { height: 18px; width: 53px; border: 1px solid #777; border-bottom: 0; border-radius: 4px 4px 0 0; background: linear-gradient(#eee, #ccc); line-height: 16px; }
.tabs button[aria-selected] { position: relative; width: 62px; height: 21px; margin-bottom: -1px; background: #ececec; }
.tabs button:disabled { width: 56px; color: #aaa89a; border-color: #bbb; background: #ececec; }
.panel { padding: 7px 7px 3px 6px; border: 1px solid #888; border-right: 2px solid #777; border-bottom: 2px solid #777; background: linear-gradient(#eaeaea 80%, #dedede); }
.row { display: flex; justify-content: space-between; align-items: center; height: 20px; margin-bottom: 3px; }
.off, .btn:disabled { color: #999; }
.pick { position: relative; display: block; height: 20px; }
.pick select { width: 100%; height: 20px; margin: 0; padding: 0 20px 0 2px; appearance: none; border: 2px solid #666; border-right-color: #47779c; border-radius: 3px; background: #fff; color: #000; font: 13px/16px "Noto Sans CJK SC", sans-serif; }
.pick::after { content: ""; position: absolute; right: 1px; top: 1px; width: 18px; height: 18px; pointer-events: none; background: linear-gradient(#d2e8fb, #78aee0 50%, #5395d6 52%, #88c4f4); border-left: 1px solid #47779c; }
.pick::before { content: ""; position: absolute; z-index: 1; right: 5px; top: 8px; border: 5px solid transparent; border-top: 6px solid #0a1838; border-bottom: 0; pointer-events: none; }
.pick.off select { background: #ccc; border-color: #aaa; color: #888; opacity: 1; }
.pick.off::after { background: #ececec; border-color: #aaa; }
.pick.off::before { border-top-color: #999; }
.w54 { width: 53px; }
.w66 { width: 67px; }
.w92 { width: 92px; }
.w108 { width: 108px; }
.btn { flex: 1; height: 23px; border: 2px solid #6c6c6c; border-top-width: 1px; border-radius: 4px; background: linear-gradient(#fff, #e4e4e4 45%, #cbcdcd 50%, #dcdcdc 75%, #fff); line-height: 18px; }
.btn:disabled { border-color: #bbb; background: linear-gradient(#f6f6f6, #e4e4e4 50%, #f4f4f4); }
.buttons { display: flex; gap: 4px; }
.buttons.inset { margin-right: 2px; }
.buttons.thick { margin-top: 6px; }
.buttons.first { margin-top: 4px; }
.panel hr, .wide-rule { height: 2px; margin: 4px 0; border: 0; border-top: 1px solid #aaa; background: #fff; }
.panel hr.tight { margin: 3px 0 2px; }
.buttons.first + hr { margin: 2px 0; }
.thick + hr { margin-bottom: 2px; }
.facet { width: 181px; height: 44px; display: flex; align-items: center; margin: 0 0 4px 50px; padding: 22px 0 0 3px; border: 2px solid #aaa; border-right-color: #888; border-bottom-color: #888; background: #d2d2d2; position: relative; }
.facet legend { position: absolute; top: 0; left: 6px; padding: 0; font-weight: 700; font-size: 13px; line-height: 18px; }
.facet label { display: flex; align-items: center; gap: 3px; width: 58px; height: 16px; white-space: nowrap; }
.facet input { flex: none; appearance: none; width: 16px; height: 16px; margin: 0; border: 2px solid #4a6c84; border-radius: 50%; background: radial-gradient(#082c60 0 3px, #7cd0f8 4px, #e8faff); }
.facet input:disabled { border: 1px solid #aaa; background: #ddd; }
.check { display: flex; align-items: center; gap: 2px; height: 22px; }
.check input { flex: none; appearance: none; width: 16px; height: 16px; margin: 0; border: 2px solid #777; border-radius: 3px; background: linear-gradient(135deg, #ccc, #fff); }
.check input:checked { display: grid; place-items: center; border-color: #3f6f8e; background: linear-gradient(#c4ecfc, #62c8f0); }
.check input:checked::after { content: ""; width: 5px; height: 9px; border: solid #08336a; border-width: 0 3px 3px 0; transform: rotate(42deg); }
.check + .buttons { margin-top: 1px; }
.speed { margin-top: 5px; }
.slider.two { padding: 0 6px 0 8px; }
.player { display: flex; gap: 4px; margin-top: 4px; padding-left: 32px; }
.player button { width: 30px; height: 31px; border: 2px solid #777; border-radius: 4px; background: linear-gradient(#fff, #e8e8e8 48%, #ccc 54%, #f0f0f0); }
.player button:disabled { border-color: #bbb; }
.player svg { width: 26px; height: 27px; }
.dlg-body .wide-rule { margin: 7px -5px 4px -3px; }
.confirm { display: flex; justify-content: flex-end; gap: 6px; padding-right: 3px; }
.confirm .btn { flex: none; width: 55px; }
.ok { border-color: #3a6038; }
```
FILE: scene.js
```js
const centre = 518;
const rad = (deg) => deg * Math.PI / 180;

// Serrated rings left between neighbouring cuts: [x, radius, core, tooth, left side, right side]
const rings = [
  [713, 161, 0, 6, 0, 1],
  [740, 135, 1, 4, .6, 1],
  [767, 112, 3, 2, 1, 1],
  [796, 93, 3, 2, 1, 1],
  [827, 76, 2, 3, 1, 1],
  [862, 61, 0, 7, 1, 0]
];
let d = "";
for (const [x, r, core, tooth, left, right] of rings) {
  const step = 7.5;
  for (let a = -90; a < 90; a += step) {
    const y0 = centre + r * Math.sin(rad(a));
    const y2 = centre + r * Math.sin(rad(a + step));
    const y1 = (y0 + y2) / 2;
    const wl = (core + tooth) * left, wr = (core + tooth) * right;
    const h = (y2 - y0) * (core ? .3 : .25);
    if (core) {
      d += `M${x - core * left} ${y0}V${y1 - h}L${x - wl} ${y1}L${x - core * left} ${y1 + h}V${y2}H${x + core * right}V${y1 + h}L${x + wr} ${y1}L${x + core * right} ${y1 - h}V${y0}Z`;
    } else {
      d += `M${x} ${y1 - h}L${x - wl + wr} ${y1 + h / 2}L${x} ${y1 + h}Z`;
    }
  }
}
const make = (parent, path) => {
  const el = document.createElementNS("http://www.w3.org/2000/svg", "path");
  el.setAttribute("d", path);
  document.getElementById(parent).append(el);
};
make("bands", d);

// Tool marks on the cylinder: [x1, y1, x2, y2, thickness at x1, thickness at x2]
const marks = [
  [491, 361, 540, 362, 1, 1], [504, 371, 531, 370, 1, 1], [682, 365, 712, 366, 1, 1], [620, 373, 662, 373, 1, 1], [667, 374, 712, 375, 1, 1],
  [491, 387, 712, 386, 2, 1], [491, 406, 521, 408, 1, 1], [529, 408, 538, 408, 1, 1], [588, 403, 612, 403, 1, 1], [616, 403, 712, 399, 1, 2],
  [491, 430, 641, 433, 3, 1], [657, 433, 678, 433, 1, 1], [691, 417, 712, 416, 1, 1], [491, 459, 605, 456, 3, 1], [622, 455, 628, 455, 1, 1],
  [671, 454, 685, 454, 1, 1], [697, 453, 712, 453, 1, 1], [491, 487, 534, 485, 1, 1], [685, 473, 712, 474, 1, 3], [584, 491, 712, 495, 1, 3],
  [491, 518, 712, 518, 3, 3], [491, 549, 538, 551, 2, 1], [591, 544, 712, 539, 1, 3], [687, 563, 712, 561, 2, 3], [491, 577, 620, 581, 3, 1],
  [687, 582, 712, 582, 1, 1], [491, 606, 655, 603, 3, 1], [693, 619, 712, 620, 1, 2], [491, 629, 527, 628, 1, 1], [578, 632, 594, 633, 1, 1],
  [606, 633, 712, 636, 1, 2], [491, 649, 712, 650, 1, 1], [491, 665, 526, 665, 1, 1], [590, 663, 606, 663, 1, 1], [638, 662, 712, 661, 1, 1], [528, 675, 574, 675, 1, 1], [683, 670, 712, 670, 1, 1]
];
let m = "";
for (const [x1, y1, x2, y2, t1, t2] of marks) {
  m += `M${x1} ${y1}L${x2} ${y2}V${y2 + t2}L${x1} ${y1 + t1}Z`;
  if (x1 === 491) m += `M490 ${y1 - 2}L493 ${y1}V${y1 + 2}L490 ${y1 + 4}Z`;
}
make("streaks", m);
```
